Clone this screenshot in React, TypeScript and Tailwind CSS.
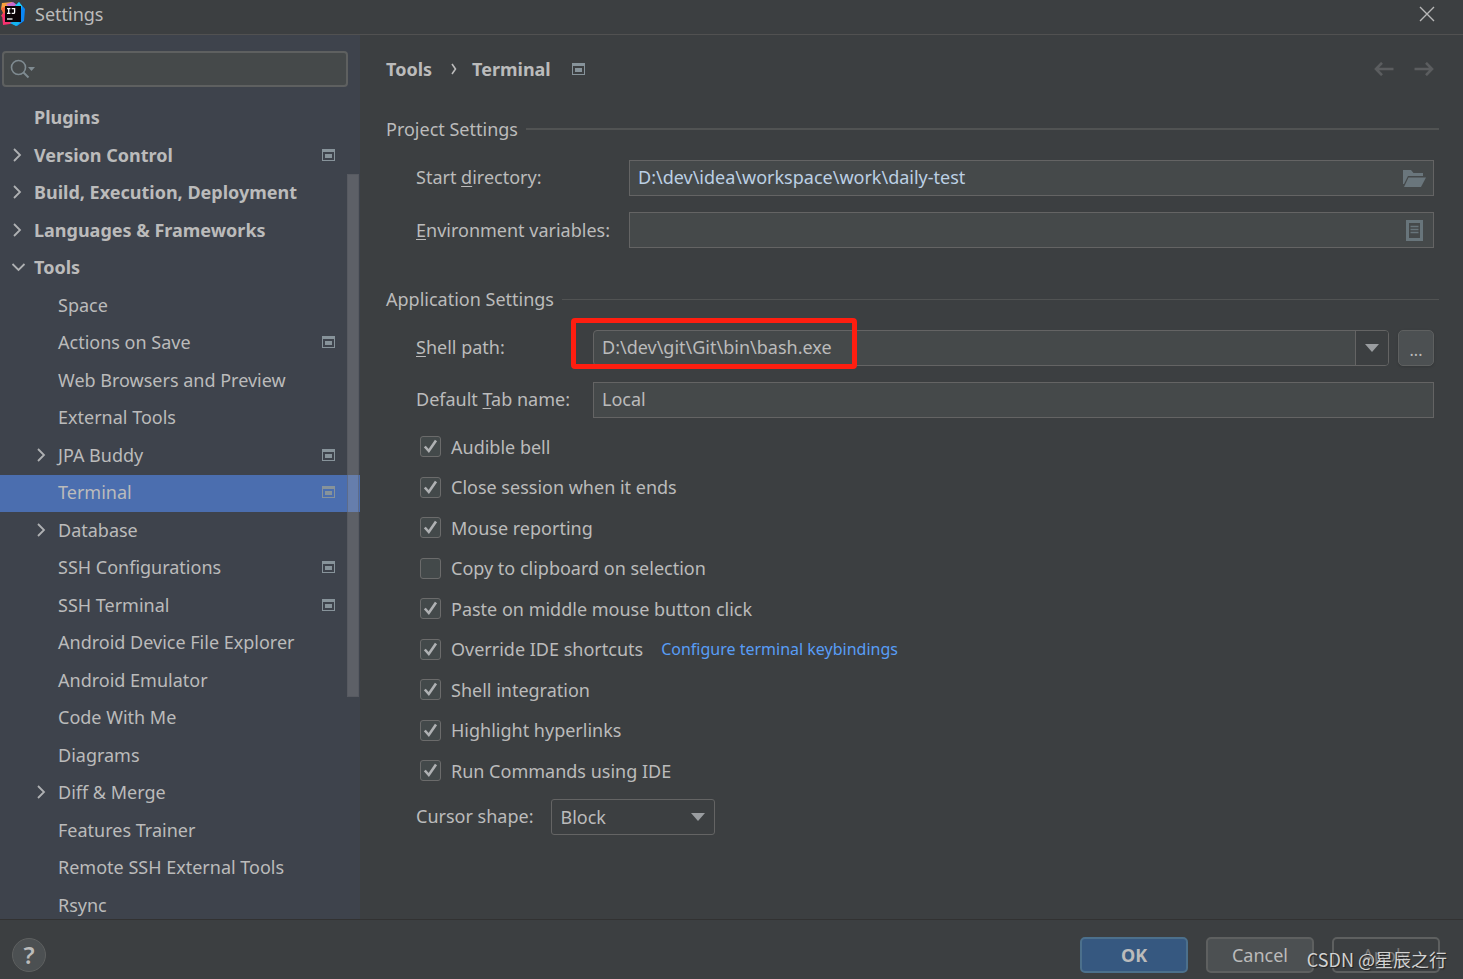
import { useState } from "react";
import type { ReactNode } from "react";

type TreeItem = {
  label: string;
  level: 0 | 1;
  state?: "open" | "closed";
  project?: boolean;
};

const treeItems: TreeItem[] = [
  { label: "Plugins", level: 0 },
  { label: "Version Control", level: 0, state: "closed", project: true },
  { label: "Build, Execution, Deployment", level: 0, state: "closed" },
  { label: "Languages & Frameworks", level: 0, state: "closed" },
  { label: "Tools", level: 0, state: "open" },
  { label: "Space", level: 1 },
  { label: "Actions on Save", level: 1, project: true },
  { label: "Web Browsers and Preview", level: 1 },
  { label: "External Tools", level: 1 },
  { label: "JPA Buddy", level: 1, state: "closed", project: true },
  { label: "Terminal", level: 1, project: true },
  { label: "Database", level: 1, state: "closed" },
  { label: "SSH Configurations", level: 1, project: true },
  { label: "SSH Terminal", level: 1, project: true },
  { label: "Android Device File Explorer", level: 1 },
  { label: "Android Emulator", level: 1 },
  { label: "Code With Me", level: 1 },
  { label: "Diagrams", level: 1 },
  { label: "Diff & Merge", level: 1, state: "closed" },
  { label: "Features Trainer", level: 1 },
  { label: "Remote SSH External Tools", level: 1 },
  { label: "Rsync", level: 1 },
];

const options = [
  { id: "bell", label: "Audible bell", on: true },
  { id: "close", label: "Close session when it ends", on: true },
  { id: "mouse", label: "Mouse reporting", on: true },
  { id: "copy", label: "Copy to clipboard on selection", on: false },
  { id: "paste", label: "Paste on middle mouse button click", on: true },
  { id: "override", label: "Override IDE shortcuts", on: true, link: "Configure terminal keybindings" },
  { id: "shell", label: "Shell integration", on: true },
  { id: "links", label: "Highlight hyperlinks", on: true },
  { id: "run", label: "Run Commands using IDE", on: true },
];

function IdeaLogo() {
  return (
    <svg width="25" height="25" viewBox="0 0 25 25" aria-hidden="true">
      <path d="M2 2 L12 1 L13 8 L4 12 L1 8Z" fill="#f9a03c" />
      <path d="M1 7 L5 6 L6 18 L1 15 L3 12Z" fill="#f4663a" />
      <path d="M2 13 L6 12 L14 21 L10 23 L3 24Z" fill="#f8316f" />
      <path d="M6 3 L13 1 L17 4 L10 7Z" fill="#c86bd0" />
      <path d="M15 5 L19 1 L25 8 L24 20 L17 25 L10 22 L19 18Z" fill="#0a87f5" />
      <path d="M15 5 L19 1 L22 5 L21 9Z" fill="#1fd0f5" />
      <path d="M10 22 L17 20 L20 22 L16 25Z" fill="#14b5f0" />
      <rect x="5" y="5" width="16" height="16" fill="#0b0508" />
      <path d="M7 7.7H10.4 M8.7 7.7V12.3 M7 12.3H10.4 M11.7 7.7H14.6V11.2Q14.6 12.4 13.4 12.4H11.7" stroke="#fff" strokeWidth="1.3" fill="none" />
      <path d="M7 18H12.5" stroke="#fff" strokeWidth="1.3" />
    </svg>
  );
}

function ProjectIcon() {
  return (
    <svg className="shrink-0" width="13" height="12" viewBox="0 0 13 12" aria-hidden="true">
      <path d="M0 0H13V12H0Z M1 3V11H12V3Z" fill="#87939a" fillRule="evenodd" />
      <rect x="3" y="5" width="7" height="4" fill="#87939a" />
    </svg>
  );
}

function TreeChevron({ open }: { open: boolean }) {
  return open ? (
    <svg width="16" height="14" viewBox="0 0 16 14" fill="none" stroke="#afb1b3" strokeWidth="1.8" aria-hidden="true">
      <path d="M2.5 4 L8.5 10 L14.5 4" />
    </svg>
  ) : (
    <svg width="16" height="14" viewBox="0 0 16 14" fill="none" stroke="#afb1b3" strokeWidth="1.8" aria-hidden="true">
      <path d="M4 1 L10 7 L4 13" />
    </svg>
  );
}

function Caret() {
  return (
    <svg width="14" height="8" viewBox="0 0 14 8" aria-hidden="true">
      <path d="M0 0H14L7 8Z" fill="#9a9da0" />
    </svg>
  );
}

function Arrow({ flip }: { flip?: boolean }) {
  return (
    <svg className={flip ? "rotate-180" : ""} width="20" height="14" viewBox="0 0 20 14" fill="none" stroke="#5b5d5f" strokeWidth="2.6" aria-hidden="true">
      <path d="M19.5 7H2 M8 0.8 L2 7 L8 13.2" />
    </svg>
  );
}

function Section({ title, thick, children }: { title: string; thick?: boolean; children: ReactNode }) {
  return (
    <section>
      <div className="flex h-6 items-center gap-2">
        <h2>{title}</h2>
        <div className={`flex-1 bg-[#515353] ${thick ? "h-0.5" : "h-px"}`} />
      </div>
      <div className="pt-[19px] pr-[5px] pl-[30px]">{children}</div>
    </section>
  );
}

function Mnemonic({ children }: { children: ReactNode }) {
  return <span className="underline underline-offset-2">{children}</span>;
}

export default function App() {
  const [selected, setSelected] = useState("Terminal");

  return (
    <div className="flex h-screen flex-col overflow-hidden bg-[#3c3f41] font-['Noto_Sans','Noto_Sans_CJK_SC',sans-serif] text-[18px] leading-6 text-[#bbbbbb]">
      <header className="flex h-[35px] shrink-0 items-center border-b border-[#515151] pb-[7px]">
        <IdeaLogo />
        <h1 className="flex-1 pl-2.5">Settings</h1>
        <button aria-label="Close" className="mr-[27px] p-px">
          <svg width="16" height="16" viewBox="0 0 16 16" stroke="#b8b8b8" strokeWidth="1.4" aria-hidden="true">
            <path d="M1 1 L15 15 M15 1 L1 15" />
          </svg>
        </button>
      </header>

      <div className="flex min-h-0 flex-1">
        <aside className="relative flex w-[360px] shrink-0 flex-col bg-[#3e434c] pt-4">
          <label className="mr-3 ml-0.5 flex h-9 shrink-0 items-center rounded border-2 border-[#5e6060] bg-[#45494a] pl-1.5">
            <svg width="26" height="20" viewBox="0 0 26 20" fill="none" aria-hidden="true">
              <circle cx="8.5" cy="8.5" r="7" stroke="#7f8b91" strokeWidth="1.6" />
              <path d="M13.5 13.5 L18.5 18.5" stroke="#7f8b91" strokeWidth="2" />
              <path d="M18 8H25L21.5 12Z" fill="#7f8b91" />
            </svg>
            <input aria-label="Search settings" className="min-w-0 flex-1 bg-transparent px-1 outline-none" />
          </label>
          <nav className="min-h-0 flex-1 overflow-hidden pt-[13px]">
            <ul>
              {treeItems.map((item) => (
                <li key={item.label} className="odd:h-[37px] even:h-[38px]">
                  <button
                    onClick={() => setSelected(item.label)}
                    className={`flex h-full w-full items-center pr-[25px] pb-[3px] text-left ${item.level === 0 ? "pl-[10px] font-bold" : "pl-[34px]"} ${selected === item.label ? "bg-[#4b6eaf]" : ""}`}
                  >
                    <span className="w-6 shrink-0">{item.state && <TreeChevron open={item.state === "open"} />}</span>
                    <span className="flex-1 whitespace-nowrap">{item.label}</span>
                    {item.project && <ProjectIcon />}
                  </button>
                </li>
              ))}
            </ul>
          </nav>
          <div className="absolute top-[139px] right-px h-[523px] w-3 border border-[#4f535a]/40 bg-[#a6a6a6]/30" />
        </aside>

        <main className="min-w-0 flex-1 pt-[22px] pr-6 pl-[26px]">
          <div className="flex h-6 items-center font-bold">
            <a href="#tools">Tools</a>
            <svg className="mr-[15px] ml-[19px]" width="6" height="12" viewBox="0 0 6 12" fill="none" stroke="#bbbbbb" strokeWidth="1.6" aria-hidden="true">
              <path d="M1 1 L4.5 6 L1 11" />
            </svg>
            <span className="pr-[21px]">Terminal</span>
            <ProjectIcon />
            <div className="ml-auto flex gap-5 pr-[5px]">
              <button aria-label="Back"><Arrow /></button>
              <button aria-label="Forward"><Arrow flip /></button>
            </div>
          </div>

          <div className="pt-9">
            <Section title="Project Settings" thick>
              <div className="grid grid-cols-[213px_1fr] items-center gap-y-4">
                <label htmlFor="start-dir" className="pb-0.5">Start <Mnemonic>d</Mnemonic>irectory:</label>
                <div className="flex h-9 items-center border border-[#646464] bg-[#45494a]">
                  <input id="start-dir" defaultValue={"D:\\dev\\idea\\workspace\\work\\daily-test"} className="min-w-0 flex-1 bg-transparent pb-0.5 pl-2 text-[#bcd0e4] outline-none" />
                  <button aria-label="Browse" className="px-[7px]">
                    <svg width="23" height="17" viewBox="0 0 23 17" fill="#6a767c" aria-hidden="true">
                      <path d="M0 0H8L10.5 3H20V6H5L1 14H0Z" />
                      <path d="M5.5 7.5H23L18 17H1Z" />
                    </svg>
                  </button>
                </div>
                <label htmlFor="env"><Mnemonic>E</Mnemonic>nvironment variables:</label>
                <div className="flex h-9 items-center border border-[#646464] bg-[#45494a]">
                  <input id="env" className="min-w-0 flex-1 bg-transparent pl-2 outline-none" />
                  <button aria-label="Edit variables" className="pr-2.5">
                    <svg width="17" height="21" viewBox="0 0 17 21" fill="none" stroke="#68757b" aria-hidden="true">
                      <rect x="1.5" y="1.5" width="14" height="18" strokeWidth="3" />
                      <path d="M4.5 6.5H12.5 M4.5 9.5H12.5 M4.5 12.5H12.5" strokeWidth="1.3" />
                    </svg>
                  </button>
                </div>
              </div>
            </Section>
          </div>

          <div className="pt-[39px]">
            <Section title="Application Settings">
              <div className="grid grid-cols-[177px_1fr] items-center gap-y-4">
                <label htmlFor="shell-path" className="pb-0.5"><Mnemonic>S</Mnemonic>hell path:</label>
                <div className="relative flex gap-[9px]">
                  <div className="flex h-9 min-w-0 flex-1 overflow-hidden rounded border border-[#646464] bg-[#45494a]">
                    <input id="shell-path" defaultValue={"D:\\dev\\git\\Git\\bin\\bash.exe"} className="min-w-0 flex-1 bg-transparent pb-0.5 pl-2 outline-none" />
                    <button aria-label="Shell path history" className="flex w-[33px] items-center justify-center border-l border-[#646464] bg-[#3c3f41]">
                      <Caret />
                    </button>
                  </div>
                  <button aria-label="Browse shell" className="h-9 w-9 rounded-[5px] border border-[#5e6060] bg-[#4c5052] pt-1 text-base leading-4 shadow-sm">...</button>
                  <div className="pointer-events-none absolute -top-3 -left-[22px] h-[51px] w-[286px] rounded border-5 border-[#ff1e10]" />
                </div>
                <label htmlFor="tab-name" className="pb-0.5">Default <Mnemonic>T</Mnemonic>ab name:</label>
                <input id="tab-name" defaultValue="Local" className="h-9 min-w-0 border border-[#646464] bg-[#45494a] pb-0.5 pl-2 outline-none" />
              </div>

              <ul className="pt-2 pl-1">
                {options.map((o) => (
                  <li key={o.id} className="flex items-center odd:h-[41px] even:h-10">
                    <label className="flex items-center gap-2.5">
                      <span className="grid h-[21px] w-[21px] place-items-center">
                        <input type="checkbox" defaultChecked={o.on} className="peer col-start-1 row-start-1 h-[21px] w-[21px] appearance-none rounded-[3px] border border-[#6b6b6b] bg-[#43494a]" />
                        <svg className="pointer-events-none invisible col-start-1 row-start-1 peer-checked:visible" width="15" height="15" viewBox="0 0 15 15" fill="none" stroke="#afb1b3" strokeWidth="2.6" aria-hidden="true">
                          <path d="M1.8 7.5 L5.8 12 L13 1.5" />
                        </svg>
                      </span>
                      {o.label}
                    </label>
                    {o.link && <a href="#keybindings" className="ml-[18px] text-base text-[#589df6]">{o.link}</a>}
                  </li>
                ))}
              </ul>

              <div className="flex items-center gap-[18px] pt-2">
                <label htmlFor="cursor" className="pb-0.5">Cursor shape:</label>
                <div className="relative">
                  <select id="cursor" className="h-9 w-[164px] appearance-none rounded-[3px] border border-[#646464] bg-[#3c3f41] pl-2 outline-none">
                    <option>Block</option>
                    <option>Underline</option>
                    <option>Vertical</option>
                  </select>
                  <span className="pointer-events-none absolute inset-y-0 right-2.5 flex items-center"><Caret /></span>
                </div>
              </div>
            </Section>
          </div>
        </main>
      </div>

      <footer className="relative flex h-[60px] shrink-0 items-center gap-[18px] border-t border-[#323232] pt-2.5 pr-[23px] pl-3">
        <button aria-label="Help" className="mr-auto h-[34px] w-[34px] rounded-full border border-[#5e6060] bg-[#4c5052] text-2xl leading-7 font-semibold">?</button>
        <button className="h-9 w-[108px] rounded-[5px] border-2 border-[#4c708c] bg-[#365880] font-bold">OK</button>
        <button className="h-9 w-[108px] rounded-[5px] border-2 border-[#5e6060] bg-[#4c5052]">Cancel</button>
        <button disabled className="h-9 w-[108px] rounded-[5px] border-2 border-[#5e6060] text-[#777777]">Apply</button>
        <span className="pointer-events-none absolute right-4 bottom-2 font-['Noto_Sans_CJK_SC',sans-serif] whitespace-nowrap text-[#d2d2d2] [text-shadow:1px_1px_1px_#222]">CSDN @星辰之行</span>
      </footer>
    </div>
  );
}
